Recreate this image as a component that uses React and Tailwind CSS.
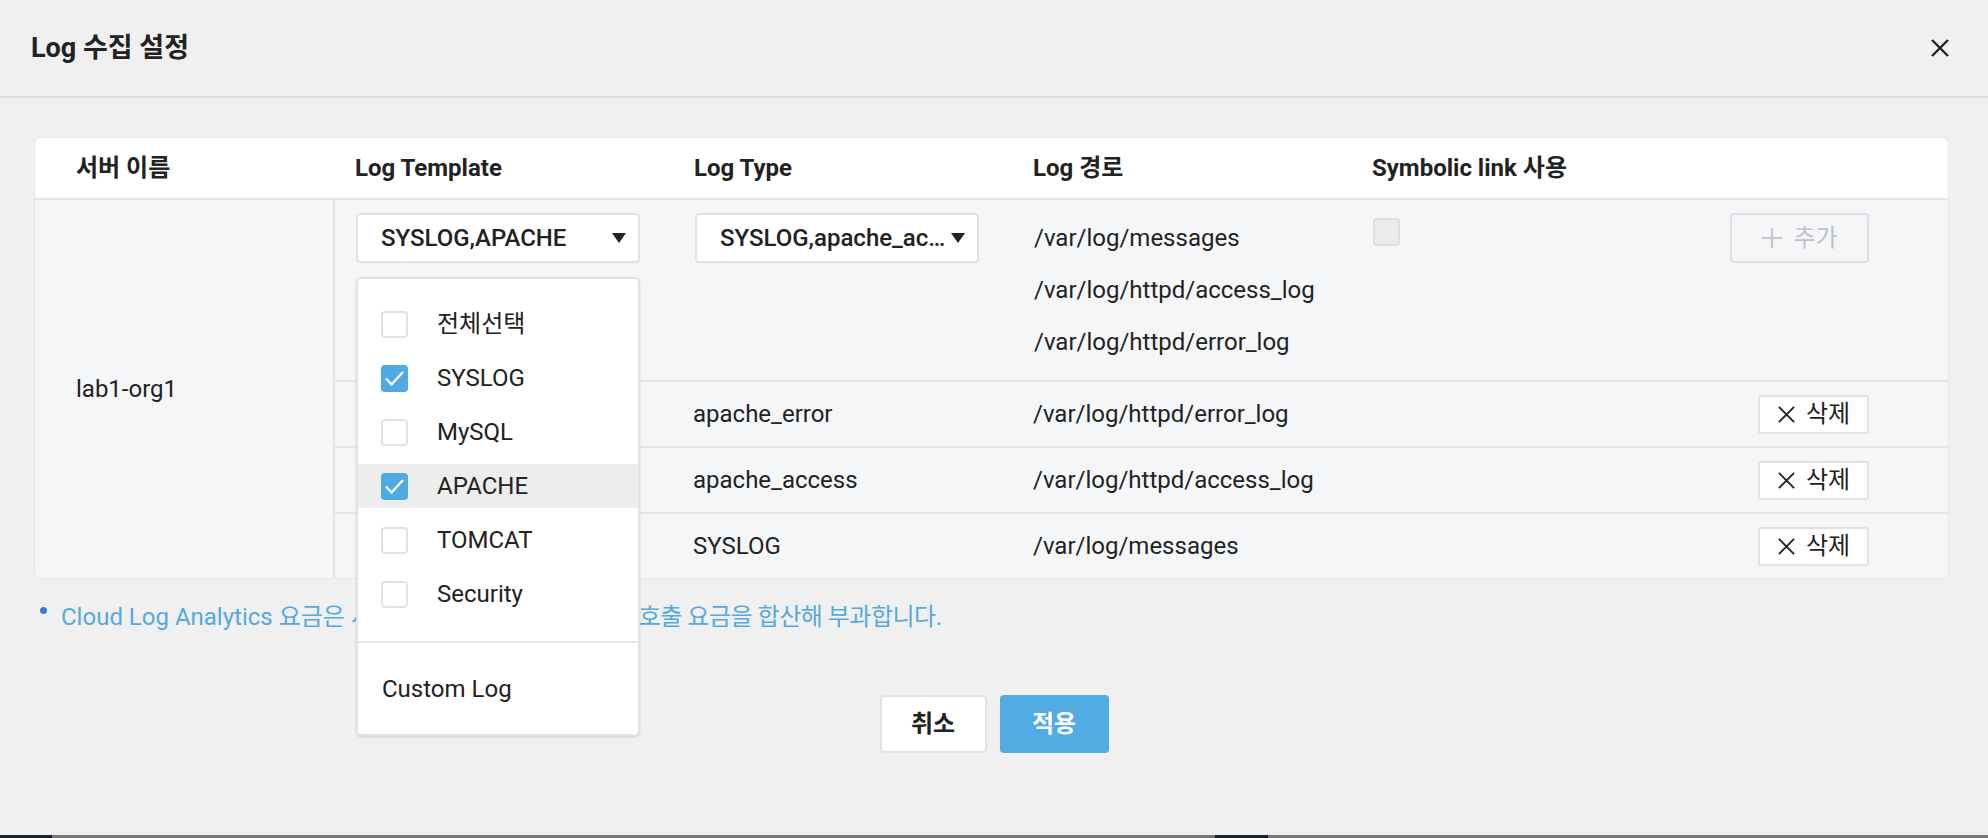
import React from "react";

const font = "font-['Roboto','Noto_Sans_CJK_KR',sans-serif]";

function CloseIcon({ size = 20, stroke = 2.4, color = "#222" }) {
  return (
    <svg width={size} height={size} viewBox="0 0 20 20" fill="none">
      <path d="M2 2L18 18M18 2L2 18" stroke={color} strokeWidth={stroke} />
    </svg>
  );
}

function PlusIcon() {
  return (
    <svg width="22" height="22" viewBox="0 0 22 22" fill="none">
      <path d="M11 1V21M1 11H21" stroke="#c3c7cd" strokeWidth="2.2" />
    </svg>
  );
}

function Caret() {
  return (
    <svg width="14" height="10" viewBox="0 0 14 10" className="shrink-0">
      <path d="M0 0H14L7 10Z" fill="#222" />
    </svg>
  );
}

function Checkbox({ checked }) {
  if (checked) {
    return (
      <span className="w-[27px] h-[27px] rounded-[4px] bg-[#4fa9e3] flex items-center justify-center shrink-0">
        <svg width="21" height="17" viewBox="0 0 21 17" fill="none">
          <path d="M2 8.5L7.5 14.5L19 2" stroke="white" strokeWidth="2.3" />
        </svg>
      </span>
    );
  }
  return <span className="w-[27px] h-[27px] rounded-[4px] border-2 border-[#e2e2e2] bg-white shrink-0" />;
}

function Select({ value }) {
  return (
    <div className="w-[284px] h-[50px] bg-white border-2 border-[#e2e2e2] rounded-[4px] flex items-center pl-[23px] pr-[12px] gap-[2px]">
      <span className="flex-1 truncate text-[24px] font-medium">{value}</span>
      <Caret />
    </div>
  );
}

const templates = [
  { name: "전체선택", checked: false },
  { name: "SYSLOG", checked: true },
  { name: "MySQL", checked: false },
  { name: "APACHE", checked: true, hover: true },
  { name: "TOMCAT", checked: false },
  { name: "Security", checked: false },
];

function TemplateMenu() {
  return (
    <div className="absolute left-[21px] top-[77px] z-10 w-[284px] bg-white border-2 border-[#e2e2e2] rounded-[5px] shadow-sm">
      <div className="flex flex-col gap-[10px] pt-[23px] pb-[25px]">
        {templates.map((t) => (
          <div
            key={t.name}
            className={
              "h-[44px] flex items-center pl-[23px] gap-[29px] text-[24px] " +
              (t.hover ? "bg-[#ededed]" : "")
            }
          >
            <Checkbox checked={t.checked} />
            <span>{t.name}</span>
          </div>
        ))}
      </div>
      <div className="border-t-2 border-[#e8e8e8] h-[93px] flex items-center pl-[24px] text-[24px]">
        Custom Log
      </div>
    </div>
  );
}

function DeleteButton() {
  return (
    <button className="w-[111px] h-[39px] bg-white border-2 border-[#e2e2e2] rounded-[3px] flex items-center justify-center gap-[10px] text-[24px]">
      <CloseIcon size={19} stroke={2} color="#222" />
      <span>삭제</span>
    </button>
  );
}

const rows = [
  { type: "apache_error", path: "/var/log/httpd/error_log" },
  { type: "apache_access", path: "/var/log/httpd/access_log" },
  { type: "SYSLOG", path: "/var/log/messages" },
];

function LogTable() {
  return (
    <div className="bg-[#f5f6f8] rounded-[6px] border border-[#e6e7ea]">
      {/* header */}
      <div className="flex h-[62px] items-center bg-white rounded-t-[6px] border-b-2 border-[#e3e4e7] text-[24px] font-bold">
        <div className="w-[300px] pl-[41px]">서버 이름</div>
        <div className="w-[339px] pl-[20px]">Log Template</div>
        <div className="w-[339px] pl-[20px]">Log Type</div>
        <div className="w-[339px] pl-[20px]">Log 경로</div>
        <div className="w-[339px] pl-[20px]">Symbolic link 사용</div>
      </div>

      <div className="flex">
        <div className="w-[300px] shrink-0 border-r-2 border-[#e3e4e7] flex items-center pl-[41px] text-[24px]">
          lab1-org1
        </div>
        <div className="flex-1 flex flex-col">
          {/* first row */}
          <div className="flex h-[182px] border-b-2 border-[#e3e4e7]">
            <div className="w-[339px] pl-[21px] pt-[13px] relative">
              <Select value="SYSLOG,APACHE" />
              <TemplateMenu />
            </div>
            <div className="w-[339px] pl-[21px] pt-[13px]">
              <Select value="SYSLOG,apache_access,apache_error" />
            </div>
            <div className="w-[339px] pl-[21px] pt-[12px] text-[24px] leading-[52px]">
              <div>/var/log/messages</div>
              <div>/var/log/httpd/access_log</div>
              <div>/var/log/httpd/error_log</div>
            </div>
            <div className="w-[339px] pl-[21px] pt-[18px]">
              <span className="block w-[27px] h-[28px] rounded-[4px] border-2 border-[#dedede] bg-[#ebebeb]" />
            </div>
            <div className="flex-1 flex justify-end pr-[79px] pt-[13px]">
              <button className="w-[139px] h-[50px] border-2 border-[#dde0e5] rounded-[4px] flex items-center justify-center gap-[10px] text-[24px] text-[#bdc1c8]">
                <PlusIcon />
                <span>추가</span>
              </button>
            </div>
          </div>

          {rows.map((r, i) => (
            <div
              key={r.type}
              className={
                "flex items-center text-[24px] " +
                (i < rows.length - 1 ? "h-[66px] border-b-2 border-[#e3e4e7]" : "h-[64px]")
              }
            >
              <div className="w-[339px]" />
              <div className="w-[339px] pl-[19px]">{r.type}</div>
              <div className="w-[339px] pl-[20px]">{r.path}</div>
              <div className="w-[339px]" />
              <div className="flex-1 flex justify-end pr-[79px]">
                <DeleteButton />
              </div>
            </div>
          ))}
        </div>
      </div>
    </div>
  );
}

export default function App() {
  return (
    <div className={`h-[838px] bg-[#f0f0f0] text-[#222] flex flex-col ${font}`}>
      <div className="h-[98px] shrink-0 border-b-2 border-[#dfdfdf] flex items-center justify-between pl-[31px] pr-[38px]">
        <h2 className="text-[27px] font-bold">Log 수집 설정</h2>
        <CloseIcon size={20} stroke={2.4} />
      </div>

      <div className="pl-[34px] pr-[39px] pt-[39px]">
        <LogTable />
        <div className="flex items-center h-[30px] mt-[23px] pl-[6px] gap-[14px] text-[24px] text-[#55a9e1]">
          <span className="w-[7px] h-[7px] rounded-full bg-[#3b7bd6] self-start mt-[5px]" />
          <span>
            Cloud Log Analytics 요금은 서버 요금과 저장 요금과 API{" "}
            <span className="tracking-[-0.5px]">호출 요금을 합산해 부과합니다.</span>
          </span>
        </div>
      </div>

      <div className="flex justify-center gap-[13px] mt-[63px]">
        <button className="w-[107px] h-[58px] bg-white border-2 border-[#e3e3e3] rounded-[4px] text-[24px] font-bold">
          취소
        </button>
        <button className="w-[109px] h-[58px] bg-[#52abe3] rounded-[4px] text-[24px] font-bold text-white">
          적용
        </button>
      </div>

      <div className="mt-auto h-[3px] flex">
        <div className="w-[52px] bg-[#1e2130]" />
        <div className="w-[1163px] bg-[#767676]" />
        <div className="w-[53px] bg-[#1e2130]" />
        <div className="flex-1 bg-[#767676]" />
      </div>
    </div>
  );
}
